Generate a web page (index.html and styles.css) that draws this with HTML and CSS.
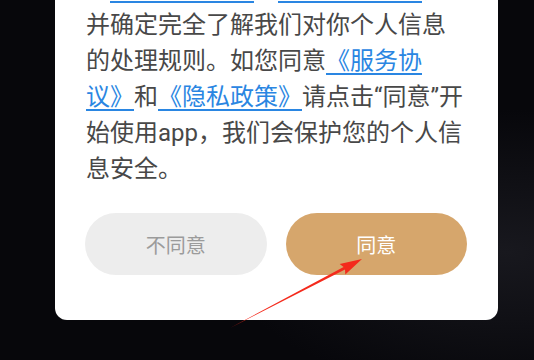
FILE: index.html
```html
<!DOCTYPE html>
<html lang="zh-CN">

<head>
  <meta charset="UTF-8">
  <meta name="viewport" content="width=device-width, initial-scale=1.0">
  <title>服务协议和隐私政策</title>
  <link rel="stylesheet" href="styles.css">
</head>

<body>
  <div class="overlay">
    <!-- Privacy dialog, pinned to the bottom of the screen -->
    <div class="dialog">
      <h2 class="dialog-title">服务协议和隐私政策</h2>
      <p class="dialog-text">请你务必审慎阅读并充分理解各条款，包括但不限于为了向你提供内容分享等服务，我们需要收集你的设备信息等个人信息。你可仔细阅读<a href="#">《服务协议》</a>、<a href="#">《隐私政策》</a>，并确定完全了解我们对你个人信息的处理规则。如您同意<a href="#">《服务协议》</a>和<a href="#">《隐私政策》</a>请点击“同意”开始使用app，我们会保护您的个人信息安全。</p>
      <div class="dialog-buttons">
        <button class="btn btn-decline">不同意</button>
        <button class="btn btn-agree">同意</button>
      </div>
    </div>
  </div>

  <!-- Red annotation arrow drawn over the screenshot -->
  <svg class="arrow" width="534" height="360" viewBox="0 0 534 360">
    <polygon points="230,328 343.6,267 339.7,263.9 362,259 345.3,274.5 345,269.6" fill="#f42a1c" />
  </svg>
</body>

</html>
```

FILE: styles.css
```css
html,
body {
  margin: 0;
  padding: 0;
  height: 100%;
}

body {
  background-color: #07070b;
  background-image: radial-gradient(ellipse at 95% 70%, #18181e 0%, rgba(7, 7, 11, 0) 40%);
  font-family: Roboto, "Noto Sans CJK SC", sans-serif;
  overflow: hidden;
}

.overlay {
  height: 100vh;
  display: flex;
  flex-direction: column;
  justify-content: flex-end;
  align-items: flex-start;
  padding: 0 0 40px 55px;
  box-sizing: border-box;
  overflow: hidden;
}

.dialog {
  width: 443px;
  flex-shrink: 0;
  background-color: white;
  border-radius: 12px;
  padding: 20px 31px 45px 31px;
  box-sizing: border-box;
}

.dialog-title {
  margin: 0 0 16px 0;
  text-align: center;
  font-size: 26px;
  color: #222;
}

.dialog-text {
  margin: 0;
  font-size: 24px;
  line-height: 36px;
  color: #484848;
  text-spacing-trim: space-all;
}

.dialog-text a {
  color: #2a86e2;
  text-decoration: underline;
  text-decoration-thickness: 1.5px;
  text-underline-offset: 4px;
}

.dialog-buttons {
  display: flex;
  gap: 19px;
  margin-top: 26px;
  margin-left: -1px;
}

.btn {
  width: 182px;
  height: 62px;
  border: none;
  border-radius: 31px;
  font-family: Roboto, "Noto Sans CJK SC", sans-serif;
  font-size: 20px;
  cursor: pointer;
}

.btn-decline {
  background-color: #ededed;
  color: #9b9b9b;
}

.btn-agree {
  background-color: #d6a66c;
  color: white;
}

.arrow {
  position: absolute;
  top: 0;
  left: 0;
  pointer-events: none;
}
```
